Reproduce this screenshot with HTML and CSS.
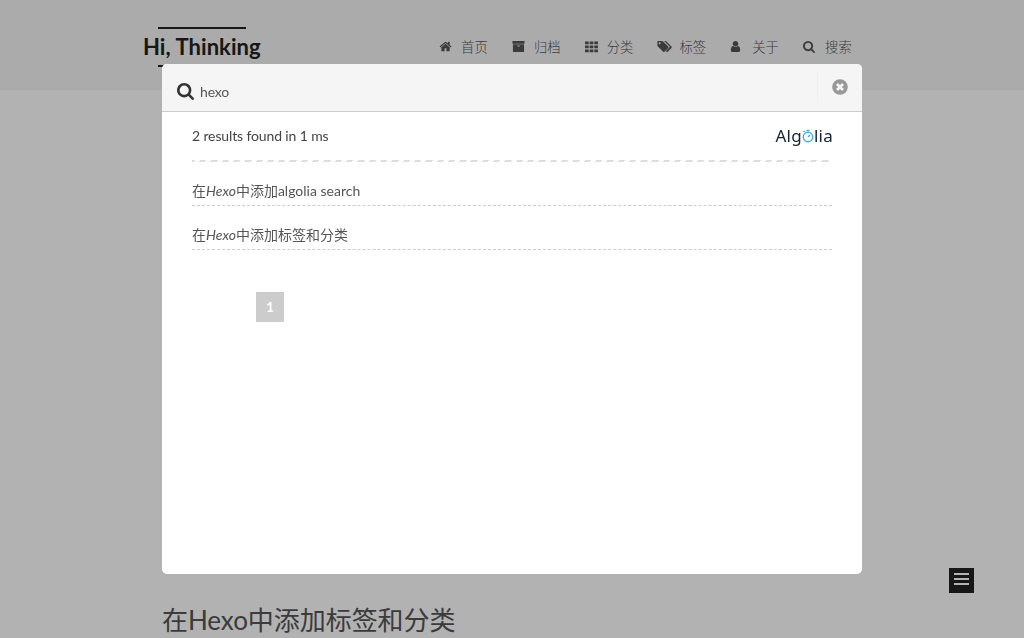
FILE: index.html
```html
<!DOCTYPE html>
<html lang="zh-CN">
<head>
<meta charset="utf-8">
<title>Hi, Thinking</title>
<link rel="stylesheet" href="styles.css">
</head>
<body>
<header class="header">
  <div class="header-inner">
    <a class="brand"><i class="brand-line"></i><span class="brand-title">Hi, Thinking</span><i class="brand-line"></i></a>
    <nav class="menu">
      <a class="menu-item"><svg class="icon" viewBox="0 0 1792 1792"><path d="M1472 992v480q0 26-19 45t-45 19h-384v-384h-256v384h-384q-26 0-45-19t-19-45v-480q0-1 .5-3t.5-3l575-474 575 474q1 2 1 6zm223-69l-62 74q-8 9-21 11h-3q-13 0-21-7l-692-577-692 577q-12 8-24 7-13-2-21-11l-62-74q-8-10-7-23.5t11-21.5l719-599q32-26 76-26t76 26l244 204v-195q0-14 9-23t23-9h192q14 0 23 9t9 23v408l219 182q10 8 11 21.5t-7 23.5z"/></svg>首页</a>
      <a class="menu-item"><svg class="icon" viewBox="0 0 1792 1792"><path d="M1088 832q0-26-19-45t-45-19h-256q-26 0-45 19t-19 45 19 45 45 19h256q26 0 45-19t19-45zm576-192v960q0 26-19 45t-45 19h-1408q-26 0-45-19t-19-45v-960q0-26 19-45t45-19h1408q26 0 45 19t19 45zm64-448v256q0 26-19 45t-45 19h-1536q-26 0-45-19t-19-45v-256q0-26 19-45t45-19h1536q26 0 45 19t19 45z"/></svg>归档</a>
      <a class="menu-item"><svg class="icon" viewBox="0 0 14 14"><path d="M0 1.5h4v3H0zM5 1.5h4v3H5zM10 1.5h4v3h-4zM0 5.8h4v3H0zM5 5.8h4v3H5zM10 5.8h4v3h-4zM0 10.1h4v3H0zM5 10.1h4v3H5zM10 10.1h4v3h-4z"/></svg>分类</a>
      <a class="menu-item"><svg class="icon icon-wide" viewBox="0 0 16 14"><path fill-rule="evenodd" d="M.3 1.9Q.3 1 1.2 1h4q.7 0 1.3.6l5.5 5.5q.6.7 0 1.4l-4 4.1q-.7.6-1.4 0L.9 6.9Q.3 6.300.3 5.600zM2.800 2.500a1.100 1.100 0 1 0 0 2.200 1.100 1.100 0 0 0 0-2.200z"/><path d="M7.300 1h1.500q.7 0 1.300.6l5.400 5.500q.6.7 0 1.400l-4 4.100q-.7.700-1.500 0l-.6-.6 3.800-3.800q.7-.8 0-1.500L8.200 1.600Q7.800 1.200 7.300 1z"/></svg>标签</a>
      <a class="menu-item"><svg class="icon icon-user" viewBox="0 0 1792 1792"><path d="M1536 1399q0 109-62.500 187t-150.500 78h-854q-88 0-150.500-78t-62.500-187q0-85 8.500-160.500t31.500-152 58.500-131 94-89 134.500-34.500q131 128 313 128t313-128q76 0 134.500 34.500t94 89 58.500 131 31.500 152 8.500 160.500zm-256-887q0 159-112.500 271.500t-271.500 112.500-271.500-112.500-112.500-271.500 112.500-271.500 271.500-112.500 271.500 112.500 112.500 271.500z"/></svg>关于</a>
      <a class="menu-item"><svg class="icon icon-search" viewBox="64 128 1664 1664"><path d="M1216 832q0-185-131.500-316.500t-316.500-131.500-316.500 131.500-131.500 316.500 131.500 316.500 316.500 131.500 316.500-131.500 131.500-316.500zm512 832q0 52-38 90t-90 38q-54 0-90-38l-343-342q-179 124-399 124-143 0-273.500-55.500t-225-150-150-225-55.500-273.500 55.500-273.500 150-225 225-150 273.500-55.500 273.500 55.500 225 150 150 225 55.500 273.500q0 220-124 399l343 343q37 37 37 90z"/></svg>搜索</a>
    </nav>
  </div>
</header>
<main class="main"><h1 class="post-title">在Hexo中添加标签和分类</h1></main>
<div class="toggle"><i class="bar"></i><i class="bar"></i><i class="bar"></i></div>
<div class="overlay"></div>
<section class="popup">
  <div class="search-head">
    <svg class="search-icon" viewBox="64 128 1664 1664"><path d="M1216 832q0-185-131.500-316.500t-316.500-131.500-316.500 131.500-131.500 316.500 131.500 316.500 316.500 131.500 316.500-131.500 131.500-316.500zm512 832q0 52-38 90t-90 38q-54 0-90-38l-343-342q-179 124-399 124-143 0-273.500-55.500t-225-150-150-225-55.500-273.500 55.500-273.500 150-225 225-150 273.500-55.500 273.500 55.500 225 150 150 225 55.500 273.500q0 220-124 399l343 343q37 37 37 90z"/></svg>
    <span class="query">hexo</span>
    <span class="close"><svg class="close-icon" viewBox="0 0 16 16"><circle cx="8" cy="8" r="7.800" fill="#999"/><path d="M5 5l6 6M11 5l-6 6" stroke="#f5f5f5" stroke-width="2.700"/></svg></span>
  </div>
  <div class="results">
    <div class="stats"><span class="stats-text">2 results found in 1 ms</span>
      <span class="algolia">Alg<svg class="watch" viewBox="0 0 12 17"><g fill="none" stroke="#46aede"><circle cx="6" cy="10" r="4.700" stroke-width="1.500"/><path d="M4.500 3.500h3M1.500 5l1.200-1M6 10l2-2" stroke-width="1.500"/></g></svg>lia</span>
    </div>
    <hr class="divider">
    <a class="hit">在<em>Hexo</em>中添加algolia search</a>
    <a class="hit">在<em>Hexo</em>中添加标签和分类</a>
    <div class="pagination"><span class="page">1</span></div>
  </div>
</section>
</body>
</html>
```
FILE: styles.css
```css
* { box-sizing: border-box; }
body {
  margin: 0;
  height: 638px;
  overflow: hidden;
  background: #fff;
  color: #555;
  font-family: Lato, "Noto Sans CJK SC", sans-serif;
  font-size: 14px;
}
.header { height: 90px; background: #f5f5f5; }
.header-inner { display: flex; width: 718px; margin: 0 auto 0 143px; padding-top: 27px; }
.brand { display: flex; flex-direction: column; align-items: center; width: 118px; color: #222; }
.brand-line { width: 88px; height: 2px; flex: none; background: #222; }
.brand .brand-line { align-self: flex-start; margin-left: 15px; }
.brand-title { height: 36px; line-height: 36px; font-size: 22px; font-weight: 700; letter-spacing: .06px; white-space: nowrap; }
.menu { display: flex; margin-left: 177.4px; padding-top: 9px; }
.menu-item { display: flex; align-items: center; width: 72.8px; height: 20px; flex: none; font-size: 13.3px; font-weight: 300; white-space: nowrap; }
.icon { width: 13px; height: 13px; margin: 1px 9px 0 1px; fill: #555; flex: none; }
.icon-wide { width: 15px; margin: 1px 8px 0 0; }
.icon-user { margin: 1px 10px 0 0; }
.icon-search { width: 12px; height: 12px; margin-right: 10px; }
.main { padding: 508px 0 0 162px; }
.post-title { margin: 0; font-size: 26px; line-height: 44px; font-weight: 400; letter-spacing: -.05px; white-space: nowrap; }
.toggle { position: fixed; left: 949px; top: 568px; width: 25px; height: 25px; padding: 5px; background: #222; display: flex; flex-direction: column; gap: 3px; }
.bar { height: 2px; background: #fff; }
.overlay { position: fixed; inset: 0; background: rgba(0, 0, 0, .3); }
.popup { position: fixed; left: 162px; top: 64px; width: 700px; height: 510px; background: #fff; border-radius: 5px; overflow: hidden; color: #555; }
.search-head { display: flex; height: 48px; background: #f5f5f5; border-bottom: 1px solid #ccc; padding-left: 15px; }
.search-icon { width: 17px; height: 17px; margin-top: 19px; fill: #333; }
.query { flex: 1; margin-left: 6px; line-height: 20px; padding-top: 18px; letter-spacing: -.15px; }
.close { width: 45px; height: 28px; margin-top: 9px; padding: 6px 0 0 14px; border-left: 1px solid #eee; }
.close-icon { display: block; width: 16px; height: 16px; }
.results { padding: 0 30px; }
.stats { display: flex; justify-content: space-between; height: 48px; line-height: 48px; color: #444; }
.stats-text { letter-spacing: -.13px; }
.algolia { display: flex; margin-right: -1px; color: #152233; font-family: "Noto Sans", sans-serif; font-size: 17px; letter-spacing: .25px; }
.watch { width: 12px; height: 17px; margin-top: 15px; }
.divider { height: 2px; margin: 0 0 18px; border: 0; background: repeating-linear-gradient(-45deg, transparent 0, transparent 3.5px, #ddd 3.5px, #ddd 8px); }
.hit { display: block; height: 26px; margin-bottom: 18px; line-height: 22px; border-bottom: 1px dashed #ccc; font-weight: 400; }
.pagination { padding: 24px 0 0 64px; }
.page { display: block; width: 28px; height: 30px; line-height: 30px; text-align: center; background: #ccc; color: #fff; font-weight: 700; }
```
